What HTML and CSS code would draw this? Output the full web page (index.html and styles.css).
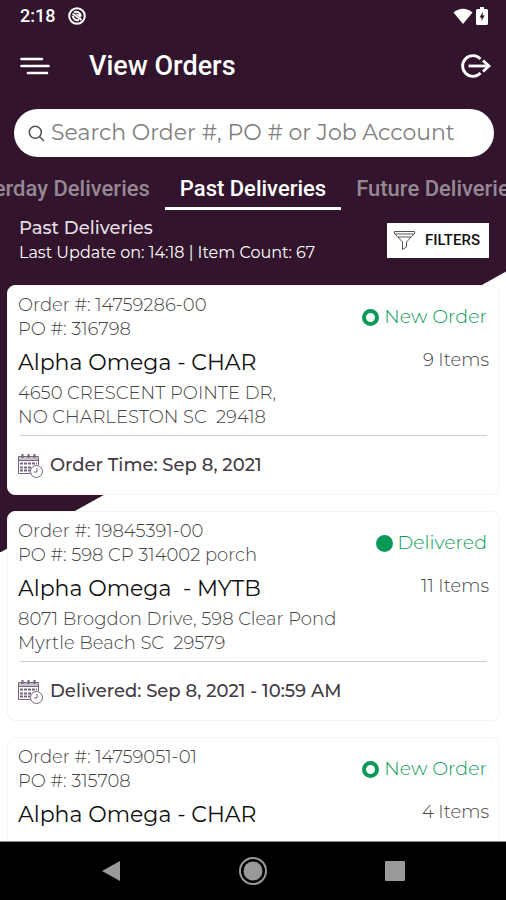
FILE: index.html
```html
<!DOCTYPE html>
<html lang="en">
<head>
<meta charset="utf-8">
<meta name="viewport" content="width=device-width, initial-scale=1">
<title>View Orders</title>
<link rel="stylesheet" href="styles.css">
</head>
<body>
<svg class="defs" aria-hidden="true">
  <symbol id="calendar" viewBox="0 0 26 27">
    <g fill="none" stroke="currentColor">
      <path d="M14 21.500H.5V4.500H20.500V13M.5 8.500H20.500"/>
      <path d="M1 6.500H20" stroke-opacity=".4" stroke-width="3"/>
      <path d="M4.500 2v4M10.500 2v4M16.500 2v4" stroke-width="2"/>
      <path d="M2 11.500h17M2 15.500h11M2 18.500h10" stroke-width="2" stroke-dasharray="3 1"/>
      <circle cx="18.500" cy="19.500" r="6" fill="#fff"/>
      <path d="M19 16v4h-3"/>
    </g>
  </symbol>
</svg>
<div class="screen">
  <header class="top">
    <div class="status-bar">
      <span class="clock">2:18</span>
      <svg class="status-app" viewBox="0 0 18 18" width="18" height="18" aria-hidden="true"><g fill="none" stroke="#fff" stroke-width="2"><circle cx="9" cy="9" r="7.800"/><path d="M4.500 6.500 13.500 13"/><path d="M6 5.200c3-1.400 6.500.2 7 4.300M4.800 8.800c.2 3 3 5 6 4.200"/></g><path d="M7 6.500l5 1 .8 4z" fill="#fff"/></svg>
      <span class="status-right">
        <svg viewBox="0 0 20 17" width="20" height="17" aria-hidden="true"><path d="M.5 4.500Q10-3 19.500 4.500L10 16z" fill="#fff"/></svg>
        <svg viewBox="0 0 12 18" width="12" height="18" aria-hidden="true"><path d="M4 0h4v2h2.500q1.500 0 1.500 1.500v13q0 1.500-1.500 1.500h-9Q0 18 0 16.500v-13Q0 2 1.500 2H4z" fill="#fff"/><path d="M6.800 5 3.500 10.500h2V14l3.200-5.500h-2z" fill="#32152c"/></svg>
      </span>
    </div>
    <div class="app-bar">
      <button class="icon-button" type="button" aria-label="Menu"><svg viewBox="0 0 30 20" width="30" height="20"><path d="M1.500 3H22M1.500 10H28.500M8 17H27" fill="none" stroke="#fff" stroke-width="2.600" stroke-linecap="round"/></svg></button>
      <h1>View Orders</h1>
      <button class="icon-button" type="button" aria-label="Log out"><svg viewBox="0 0 32 26" width="32" height="26"><g fill="none" stroke="#fff" stroke-width="2.800"><path d="M21.500 6A10.300 10.300 0 1 0 21.500 20"/><path d="M9.500 13H29"/><path d="M24 7.500 30 13 24 18.500"/></g></svg></button>
    </div>
    <label class="search">
      <svg viewBox="0 0 17 17" width="17" height="17" aria-hidden="true"><g fill="none" stroke="#555" stroke-width="1.600"><circle cx="7.300" cy="7.300" r="6"/><path d="M11.700 11.700 16 16"/></g></svg>
      <input type="search" placeholder="Search Order #, PO # or Job Account" aria-label="Search orders">
    </label>
    <nav class="tabs">
      <a href="#yesterday">Yesterday Deliveries</a>
      <a href="#past" class="active">Past Deliveries</a>
      <a href="#future">Future Deliveries</a>
    </nav>
    <div class="summary">
      <div>
        <h2>Past Deliveries</h2>
        <p>Last Update on: 14:18 | Item Count: 67</p>
      </div>
      <button class="filters" type="button"><svg viewBox="0 0 23 21" width="23" height="21" aria-hidden="true"><path d="M1.500 1.500H21.500V3.500L13.500 12V17L9.500 19.500V12L1.500 3.500zM2 4H21M5 7H18" fill="none" stroke="#555"/></svg>FILTERS</button>
    </div>
  </header>
  <main class="orders">
    <article class="card">
      <div class="details">
        <div class="info">
          <p>Order #: 14759286-00</p>
          <p>PO #: 316798</p>
          <h3>Alpha Omega - CHAR</h3>
          <p>4650 CRESCENT POINTE DR,</p>
          <p>NO CHARLESTON SC&nbsp; 29418</p>
        </div>
        <div class="state">
          <span class="status"><i class="dot"></i>New Order</span>
          <span class="items">9 Items</span>
        </div>
      </div>
      <footer><svg width="26" height="27" aria-hidden="true"><use href="#calendar"/></svg>Order Time: Sep 8, 2021</footer>
    </article>
    <article class="card">
      <div class="details">
        <div class="info">
          <p>Order #: 19845391-00</p>
          <p>PO #: 598 CP 314002 porch</p>
          <h3>Alpha Omega&nbsp; - MYTB</h3>
          <p>8071 Brogdon Drive, 598 Clear Pond</p>
          <p>Myrtle Beach SC&nbsp; 29579</p>
        </div>
        <div class="state">
          <span class="status"><i class="dot full"></i>Delivered</span>
          <span class="items">11 Items</span>
        </div>
      </div>
      <footer><svg width="26" height="27" aria-hidden="true"><use href="#calendar"/></svg>Delivered: Sep 8, 2021 - 10:59 AM</footer>
    </article>
    <article class="card">
      <div class="details">
        <div class="info">
          <p>Order #: 14759051-01</p>
          <p>PO #: 315708</p>
          <h3>Alpha Omega - CHAR</h3>
        </div>
        <div class="state">
          <span class="status"><i class="dot"></i>New Order</span>
          <span class="items">4 Items</span>
        </div>
      </div>
    </article>
  </main>
  <nav class="system-nav">
    <button type="button" aria-label="Back"><svg viewBox="0 0 20 22" width="20" height="22"><path d="M19 1V21L1 11z" fill="#999"/></svg></button>
    <button type="button" aria-label="Home"><svg viewBox="0 0 28 28" width="28" height="28"><circle cx="14" cy="14" r="13" fill="none" stroke="#999" stroke-width="2"/><circle cx="14" cy="14" r="9.500" fill="#999"/></svg></button>
    <button type="button" aria-label="Recent apps"><svg viewBox="0 0 20 20" width="20" height="20"><rect width="20" height="20" rx="1" fill="#999"/></svg></button>
  </nav>
</div>
</body>
</html>
```
FILE: styles.css
```css
* { box-sizing: border-box; }

body, h1, h2, h3, p { margin: 0; }

body {
  font-family: Montserrat, Inter, "Liberation Sans", sans-serif;
  font-size: 18px;
  font-weight: 300;
  line-height: 24px;
  color: #444;
}

button {
  padding: 0;
  border: 0;
  background: none;
  font: inherit;
}

svg { display: block; flex: none; }

.defs { position: absolute; width: 0; height: 0; }

.screen {
  display: flex;
  flex-direction: column;
  height: 100vh;
  overflow: hidden;
  background:
    linear-gradient(#32152c, #32152c) 0 0 / 100% 271px no-repeat,
    linear-gradient(to bottom right, #32152c 50%, #fff calc(50% + 1px)) 0 271px / 100% 281px no-repeat,
    #fff;
}

.top { flex: none; color: #fff; }

.status-bar {
  display: flex;
  align-items: center;
  gap: 13px;
  height: 32px;
  padding: 0 18px 0 20px;
  font-family: Roboto, sans-serif;
  font-weight: 500;
}

.status-right {
  display: flex;
  align-items: center;
  gap: 3px;
  margin-left: auto;
}

.app-bar {
  display: flex;
  align-items: center;
  height: 67px;
  padding: 0 15px 0 20px;
}

h1 {
  flex: 1;
  margin-left: 39px;
  font: 500 27px/32px Roboto, sans-serif;
}

.search {
  display: flex;
  align-items: center;
  gap: 6px;
  height: 48px;
  margin: 10px 12px 0 14px;
  padding: 0 20px 0 14px;
  border-radius: 24px;
  background: #fff;
}

.search input {
  flex: 1;
  min-width: 0;
  padding: 0;
  border: 0;
  outline: 0;
  background: none;
  font: inherit;
  font-size: 22px;
  font-weight: 400;
  line-height: 32px;
}

.search input::placeholder { color: #808080; opacity: 1; }

.tabs {
  display: grid;
  grid-template-columns: 1fr auto 1fr;
  height: 39px;
  margin-top: 14px;
  overflow: hidden;
  font: 500 22px/36px Roboto, sans-serif;
  white-space: nowrap;
}

.tabs a {
  min-width: 0;
  padding: 0 15px;
  color: #968795;
  text-decoration: none;
}

.tabs a:first-child { display: flex; justify-content: flex-end; }

.tabs .active { color: #fff; border-bottom: 3px solid #fff; }

.summary {
  display: flex;
  align-items: center;
  justify-content: space-between;
  height: 60px;
  padding: 0 17px 0 19px;
}

.summary h2 { font-size: 18px; font-weight: 500; line-height: 26px; color: #e4dde3; }

.summary p { font-size: 16px; font-weight: 400; }

.filters {
  display: flex;
  align-items: center;
  gap: 9px;
  height: 35px;
  padding: 0 9px 0 6px;
  background: #fff;
  color: #111;
  font: 500 15px/20px Roboto, sans-serif;
}

.orders {
  flex: 1;
  min-height: 0;
  overflow: hidden;
  padding: 15px 6px 0 7px;
}

.card {
  margin-bottom: 16px;
  padding: 7px 10px 0;
  border: 1px solid #f4f4f4;
  border-radius: 8px;
  background: #fff;
}

.details {
  display: flex;
  justify-content: space-between;
  min-height: 143px;
  margin: 0 2px;
  padding-bottom: 6px;
  border-bottom: 1px solid #ccc;
}

.info { margin-left: -2px; white-space: nowrap; }

h3 {
  margin: 8px 0 4px;
  font-size: 22px;
  font-weight: 400;
  line-height: 28px;
  color: #111;
}

.state {
  display: flex;
  flex-direction: column;
  align-items: flex-end;
  gap: 19px;
  padding-top: 12px;
  white-space: nowrap;
}

.status {
  display: flex;
  align-items: center;
  gap: 5px;
  font-size: 19px;
  color: #0a9a57;
}

.dot {
  width: 17px;
  height: 17px;
  border: 4px solid #0a9a57;
  border-radius: 50%;
}

.dot.full { background: #0a9a57; }

.items { margin-right: -2px; }

.card footer {
  display: flex;
  align-items: center;
  gap: 6px;
  height: 58px;
  font-weight: 500;
  color: #443b44;
}

.card footer svg { color: #75657a; }

.system-nav {
  display: flex;
  flex: none;
  justify-content: space-between;
  align-items: center;
  height: 59px;
  padding: 0 20%;
  border-top: 1px solid #888;
  background: #000;
}
```
